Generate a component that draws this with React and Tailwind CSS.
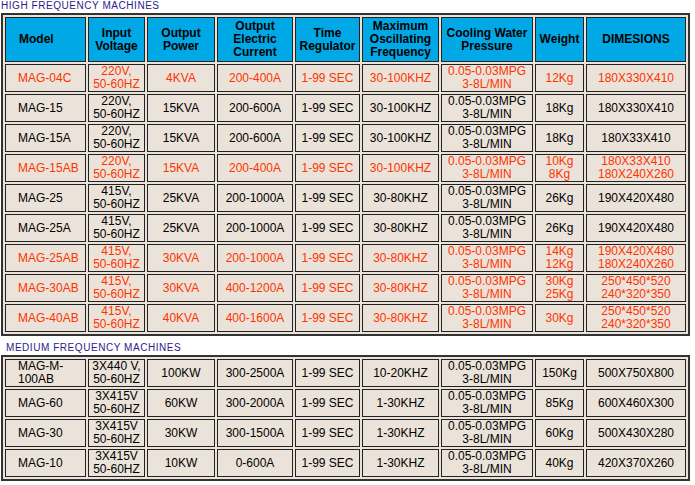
const widths = [
  "w-[81px]",
  "w-[57px]",
  "w-[68px]",
  "w-[76px]",
  "w-[65px]",
  "w-[77px]",
  "w-[92px]",
  "w-[49px]",
  "w-[100px]",
];

const header = [
  ["Model"],
  ["Input", "Voltage"],
  ["Output", "Power"],
  ["Output", "Electric", "Current"],
  ["Time", "Regulator"],
  ["Maximum", "Oscillating", "Frequency"],
  ["Cooling Water", "Pressure"],
  ["Weight"],
  ["DIMESIONS"],
];

const water = ["0.05-0.03MPG", "3-8L/MIN"];

const high = [
  { hot: true, cells: ["MAG-04C", ["220V,", "50-60HZ"], "4KVA", "200-400A", "1-99 SEC", "30-100KHZ", water, "12Kg", "180X330X410"] },
  { cells: ["MAG-15", ["220V,", "50-60HZ"], "15KVA", "200-600A", "1-99 SEC", "30-100KHZ", water, "18Kg", "180X330X410"] },
  { cells: ["MAG-15A", ["220V,", "50-60HZ"], "15KVA", "200-600A", "1-99 SEC", "30-100KHZ", water, "18Kg", "180X33X410"] },
  { hot: true, cells: ["MAG-15AB", ["220V,", "50-60HZ"], "15KVA", "200-400A", "1-99 SEC", "30-100KHZ", water, ["10Kg", "8Kg"], ["180X33X410", "180X240X260"]] },
  { cells: ["MAG-25", ["415V,", "50-60HZ"], "25KVA", "200-1000A", "1-99 SEC", "30-80KHZ", water, "26Kg", "190X420X480"] },
  { cells: ["MAG-25A", ["415V,", "50-60HZ"], "25KVA", "200-1000A", "1-99 SEC", "30-80KHZ", water, "26Kg", "190X420X480"] },
  { hot: true, cells: ["MAG-25AB", ["415V,", "50-60HZ"], "30KVA", "200-1000A", "1-99 SEC", "30-80KHZ", water, ["14Kg", "12Kg"], ["190X420X480", "180X240X260"]] },
  { hot: true, cells: ["MAG-30AB", ["415V,", "50-60HZ"], "30KVA", "400-1200A", "1-99 SEC", "30-80KHZ", water, ["30Kg", "25Kg"], ["250*450*520", "240*320*350"]] },
  { hot: true, cells: ["MAG-40AB", ["415V,", "50-60HZ"], "40KVA", "400-1600A", "1-99 SEC", "30-80KHZ", water, "30Kg", ["250*450*520", "240*320*350"]] },
];

const medium = [
  { cells: [["MAG-M-", "100AB"], ["3X440 V,", "50-60HZ"], "100KW", "300-2500A", "1-99 SEC", "10-20KHZ", water, "150Kg", "500X750X800"] },
  { cells: ["MAG-60", ["3X415V", "50-60HZ"], "60KW", "300-2000A", "1-99 SEC", "1-30KHZ", water, "85Kg", "600X460X300"] },
  { cells: ["MAG-30", ["3X415V", "50-60HZ"], "30KW", "300-1500A", "1-99 SEC", "1-30KHZ", water, "60Kg", "500X430X280"] },
  { cells: ["MAG-10", ["3X415V", "50-60HZ"], "10KW", "0-600A", "1-99 SEC", "1-30KHZ", water, "40Kg", "420X370X260"] },
];

const Lines = ({ value }) =>
  Array.isArray(value)
    ? value.map((line, i) => (
        <span key={i} className="block whitespace-nowrap">
          {line}
        </span>
      ))
    : <span className="whitespace-nowrap">{value}</span>;

const Machines = ({ rows, withHeader }) => (
  <table className="ml-[1px] w-[689px] table-fixed border-separate border-spacing-[2px] border-2 border-[#333] bg-[#ebe3d9] text-[12px] leading-[13px]">
    {withHeader && (
      <thead>
        <tr>
          {header.map((h, i) => (
            <th
              key={i}
              className={`${widths[i]} h-[45px] p-0 border border-[#222] bg-[#00a9e6] font-bold text-black text-center align-middle leading-[13px] ${i === 0 ? "text-left pl-[13px]" : ""}`}
            >
              <Lines value={h} />
            </th>
          ))}
        </tr>
      </thead>
    )}
    <tbody>
      {rows.map((row, r) => (
        <tr key={r}>
          {row.cells.map((c, i) => (
            <td
              key={i}
              className={`${!withHeader && r === 0 ? widths[i] : ""} h-[28px] p-0 border border-[#222] align-middle ${
                i === 0 ? "text-left pl-[12px]" : "text-center"
              } ${row.hot ? "text-[#ff3300]" : "text-black"}`}
            >
              <Lines value={c} />
            </td>
          ))}
        </tr>
      ))}
    </tbody>
  </table>
);

export default function App() {
  return (
    <div className="w-[695px] h-[485px] bg-white font-['Liberation_Sans',Arial,sans-serif]">
      <div className="h-[13px] pl-[1px] text-[10px] leading-[11px] tracking-[0.55px] text-[#2b1b8c]">
        HIGH FREQUENCY MACHINES
      </div>
      <Machines rows={high} withHeader />
      <div className="h-[19px] pt-[6px] pl-[6px] text-[10px] leading-[11px] tracking-[0.55px] text-[#2b1b8c]">
        MEDIUM FREQUENCY MACHINES
      </div>
      <Machines rows={medium} />
    </div>
  );
}
